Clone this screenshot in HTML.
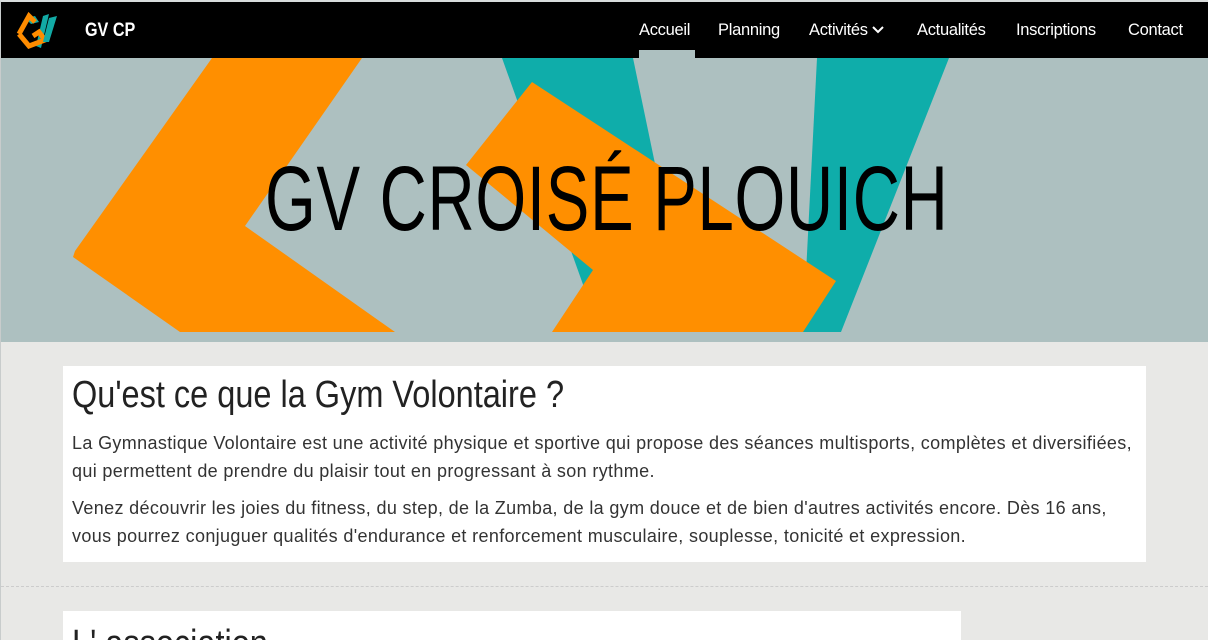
<!DOCTYPE html>
<html><head><meta charset="utf-8"><style>
*{margin:0;padding:0;box-sizing:border-box}
html,body{width:1208px;height:640px;overflow:hidden}
body{background:#e8e8e6;font-family:"Liberation Sans",sans-serif;position:relative}
.frame{position:absolute;left:0;top:0;width:1208px;height:640px;border-top:2px solid #d8dcdc;border-left:1px solid #c8cccc}
nav{position:absolute;left:1px;top:2px;width:1207px;height:56px;background:#000}
.brand{position:absolute;left:84px;top:18px;color:#fff;font-size:19px;font-weight:bold;transform:scaleX(.85);transform-origin:left}
.nav a{position:absolute;top:19px;color:#fff;font-size:16.5px;text-decoration:none;letter-spacing:-0.3px}
.ul{position:absolute;left:638px;top:48px;width:56px;height:8px;background:#adc0c0}
.hero{position:absolute;left:1px;top:58px;width:1207px;height:284px;background:#adc0c0;overflow:hidden}
.title{position:absolute;left:264px;top:95px;font-size:92px;color:#000;white-space:nowrap;transform:scaleX(.71);transform-origin:left;letter-spacing:1px;line-height:1}
.card{position:absolute;background:#fff;left:63px;overflow:hidden}
h2{font-weight:normal;font-size:38px;transform:scaleX(.855);transform-origin:left;white-space:nowrap;color:#222}
p{font-size:18px;line-height:28px;color:#333;letter-spacing:0.35px}
.dash{position:absolute;left:1px;right:0;top:586px;border-top:1px dashed #ccc}
</style></head><body>
<div class="frame"></div>
<nav>
<svg style="position:absolute;left:14px;top:10px" width="44" height="38" viewBox="0 0 44 38">
<polygon points="28,4 34,2 26,36 21,34" fill="#12aaa5"/>
<polygon points="10,6 20,4 24,10 16,12" fill="#12aaa5"/>
<path d="M4,22 L14,4 L20,10 M4,22 L14,34 L30,28 L24,20 L18,24" stroke="#ff8c00" stroke-width="5" fill="none" stroke-linejoin="miter"/>
<polygon points="34,6 42,4 34,30 28,30" fill="#12aaa5"/>
</svg>
<div class="brand">GV CP</div>
<div class="nav">
<a style="left:638px">Accueil</a>
<a style="left:717px">Planning</a>
<a style="left:808px">Activités <svg width="12" height="8" viewBox="0 0 12 8" style="vertical-align:1px"><path d="M1,1 L6,6 L11,1" stroke="#fff" stroke-width="2" fill="none"/></svg></a>
<a style="left:916px">Actualités</a>
<a style="left:1015px">Inscriptions</a>
<a style="left:1127px">Contact</a>
</div>
<div class="ul"></div>
</nav>
<div class="hero">
<svg width="1207" height="284" style="position:absolute;left:-1px;top:0" viewBox="0 58 1207 284">
<polygon points="502,58 633,58 690,332 600,332" fill="#0fadaa"/>
<polygon points="817,58 949,58 841,332 803,332" fill="#0fadaa"/>
<polygon points="212,58 362,58 245,226 395,332 180,332 73,257 75,251" fill="#ff8f00"/>
<polygon points="532,82 836,281 803,332 552,332 593,270 466,165" fill="#ff8f00"/>
</svg>
<div class="title">GV CROISÉ PLOUICH</div>
</div>
<div class="card" style="top:366px;width:1083px;height:196px;padding:8px 9px">
<h2>Qu'est ce que la Gym Volontaire ?</h2>
<p style="margin-top:12px">La Gymnastique Volontaire est une activité physique et sportive qui propose des séances multisports, complètes et diversifiées, qui permettent de prendre du plaisir tout en progressant à son rythme.</p>
<p style="margin-top:9px">Venez découvrir les joies du fitness, du step, de la Zumba, de la gym douce et de bien d'autres activités encore. Dès 16 ans, vous pourrez conjuguer qualités d'endurance et renforcement musculaire, souplesse, tonicité et expression.</p>
</div>
<div class="dash"></div>
<div class="card" style="top:611px;width:898px;height:29px;padding:12px 9px">
<h2>L' association</h2>
</div>
</body></html>
